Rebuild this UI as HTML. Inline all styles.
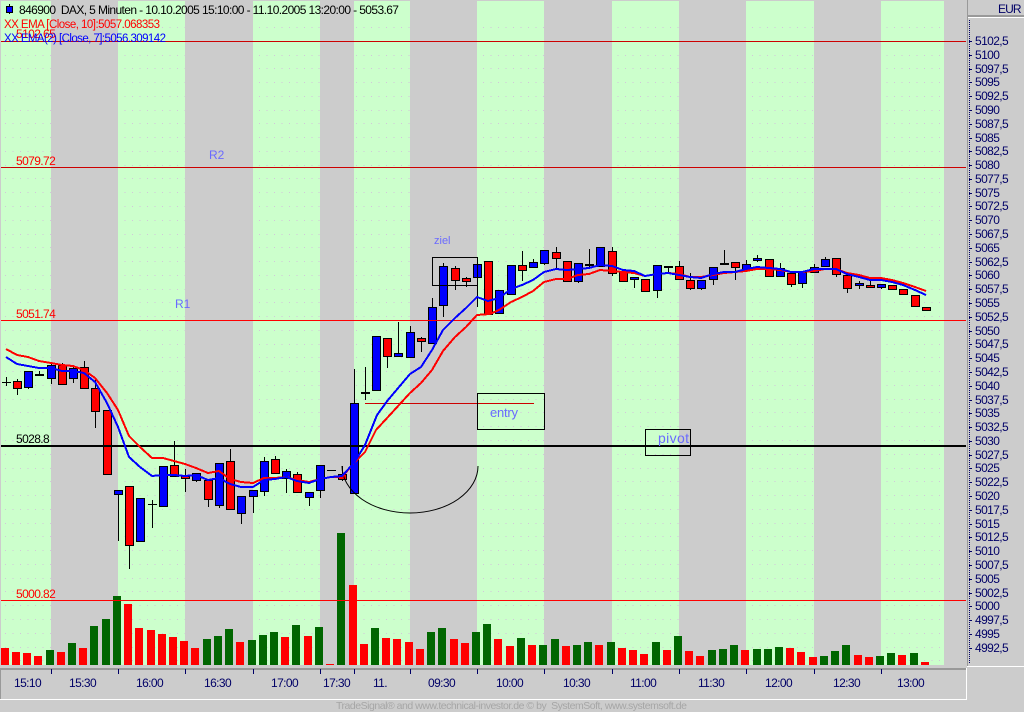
<!DOCTYPE html>
<html><head><meta charset="utf-8"><title>DAX</title>
<style>
html,body{margin:0;padding:0;background:#ccc;width:1024px;height:712px;overflow:hidden}
svg{display:block;font-family:"Liberation Sans",sans-serif;font-size:12px}
.c{shape-rendering:crispEdges}
.ax text{fill:#000066;letter-spacing:-.6px}
.lv{letter-spacing:-.6px}
.n{fill:#6a6aff}
</style></head><body>
<svg width="1024" height="712" viewBox="0 0 1024 712" xmlns="http://www.w3.org/2000/svg">
<rect width="1024" height="712" fill="#cccccc"/>
<g class="c">
<rect x="1" y="1" width="943" height="664" fill="#ccffcc"/>
<path fill="none" stroke="#d2c6da" stroke-width="1" stroke-dasharray="1 6.47" d="M5 27.5H944M5 55.5H944M5 68.5H944M5 82.5H944M5 96.5H944M5 110.5H944M5 123.5H944M5 137.5H944M5 151.5H944M5 165.5H944M5 178.5H944M5 192.5H944M5 206.5H944M5 220.5H944M5 234.5H944M5 247.5H944M5 261.5H944M5 275.5H944M5 289.5H944M5 302.5H944M5 316.5H944M5 330.5H944M5 344.5H944M5 357.5H944M5 371.5H944M5 385.5H944M5 399.5H944M5 412.5H944M5 426.5H944M5 440.5H944M5 454.5H944M5 468.5H944M5 481.5H944M5 495.5H944M5 509.5H944M5 523.5H944M5 536.5H944M5 550.5H944M5 564.5H944M5 578.5H944M5 591.5H944M5 605.5H944M5 619.5H944M5 633.5H944M5 647.5H944M5 660.5H944"/>
<path fill="#cccccc" d="M51 0h67v665h-67zM185 0h68v665h-68zM320 0h34v665h-34zM410 0h67v665h-67zM544 0h68v665h-68zM679 0h67v665h-67zM814 0h67v665h-67zM944 0h23v665h-23z"/>
<!-- volume red -->
<path fill="#ff0000" d="M1 648h8v17h-8zM12 652h8v13h-8zM23 653h8v12h-8zM34 656h8v9h-8zM57 652h8v13h-8zM79 648h8v17h-8zM124 604h8v61h-8zM135 628h8v37h-8zM147 630h8v35h-8zM158 634h8v31h-8zM169 637h8v28h-8zM180 641h8v24h-8zM191 648h8v17h-8zM236 642h8v23h-8zM281 637h8v28h-8zM304 636h8v29h-8zM326 664h8v1h-8zM349 585h8v80h-8zM360 644h8v21h-8zM382 638h8v27h-8zM393 639h8v26h-8zM405 642h8v23h-8zM416 649h8v16h-8zM450 639h8v26h-8zM461 643h8v22h-8zM494 639h8v26h-8zM506 646h8v19h-8zM528 645h8v20h-8zM562 646h8v19h-8zM595 645h8v20h-8zM618 648h8v17h-8zM629 650h8v15h-8zM640 654h8v11h-8zM663 650h8v15h-8zM685 651h8v14h-8zM696 656h8v9h-8zM741 650h8v15h-8zM786 648h8v17h-8zM797 652h8v13h-8zM809 657h8v8h-8zM854 655h8v10h-8zM865 657h8v8h-8zM898 655h8v10h-8zM921 662h8v3h-8z"/>
<!-- volume green -->
<path fill="#006600" d="M46 650h8v15h-8zM68 643h8v22h-8zM90 626h8v39h-8zM102 619h8v46h-8zM113 596h8v69h-8zM203 639h8v26h-8zM214 636h8v29h-8zM225 629h8v36h-8zM248 640h8v25h-8zM259 635h8v30h-8zM270 632h8v33h-8zM292 625h8v40h-8zM315 627h8v38h-8zM337 533h8v132h-8zM371 628h8v37h-8zM427 632h8v33h-8zM438 628h8v37h-8zM472 632h8v33h-8zM483 624h8v41h-8zM517 638h8v27h-8zM539 645h8v20h-8zM551 639h8v26h-8zM573 645h8v20h-8zM584 642h8v23h-8zM607 642h8v23h-8zM652 642h8v23h-8zM674 636h8v29h-8zM708 650h8v15h-8zM719 649h8v16h-8zM730 645h8v20h-8zM753 649h8v16h-8zM764 649h8v16h-8zM775 647h8v18h-8zM820 656h8v9h-8zM831 651h8v14h-8zM842 645h8v20h-8zM876 656h8v9h-8zM887 653h8v12h-8zM910 653h8v12h-8z"/>
<!-- wicks and dashes -->
<path fill="none" stroke="#000" stroke-width="1" d="M6.5 377V386M2 382.5H11M17.5 379V395M28.5 371V389M39.5 371V376M51.5 364V384M62.5 363V385M73.5 365V383M84.5 361V388M95.5 379V428M118.5 494V541M129.5 545V569M152.5 500V528M148 504.5H157M174.5 441V476M185.5 469V492M196.5 473V482M208.5 499V507M219.5 505V508M230.5 449V461M241.5 513V524M253.5 496V513M264.5 457V496M275.5 456V474M286.5 469V493M297.5 472V493M309.5 497V506M320.5 490V498M327 470.5H336M342.5 466V481M354.5 369V403M365.5 367V400M387.5 356V368M398.5 322V353M410.5 326V332M421.5 337V352M432.5 298V344M443.5 263V317M455.5 266V290M466.5 277V287M477.5 277V307M522.5 251V281M533.5 259V267M544.5 263V265M556.5 247V268M578.5 281V283M589.5 249V268M612.5 247V276M634.5 279V288M657.5 290V298M668.5 267V272M679.5 261V266M690.5 273V290M701.5 288V290M713.5 279V285M724.5 250V264M735.5 267V280M746.5 260V264M757.5 255V262M780.5 263V268M791.5 284V287M802.5 283V288M814.5 264V267M825.5 257V259M836.5 274V277M847.5 288V293M859.5 281V289M870.5 280V285M881.5 287V289"/>
<path fill="#000" d="M35 374h9v2h-9zM361 392h9v2h-9zM585 264h9v2h-9zM664 266h9v2h-9zM720 263h9v2h-9z"/>
<!-- red bodies -->
<path fill="#ff0000" stroke="#000" stroke-width="1" d="M13.5 381.5h8v7h-8zM58.5 365.5h8v19h-8zM80.5 367.5h8v21h-8zM91.5 388.5h8v23h-8zM103.5 410.5h8v64h-8zM125.5 486.5h8v59h-8zM170.5 465.5h8v11h-8zM181.5 476.5h8v2h-8zM204.5 480.5h8v19h-8zM226.5 461.5h8v48h-8zM271.5 459.5h8v14h-8zM293.5 474.5h8v18h-8zM338.5 474.5h8v5h-8zM383.5 338.5h8v18h-8zM417.5 338.5h8v3h-8zM451.5 268.5h8v12h-8zM462.5 278.5h8v3h-8zM484.5 261.5h8v53h-8zM518.5 265.5h8v5h-8zM552.5 252.5h8v6h-8zM563.5 261.5h8v20h-8zM608.5 251.5h8v22h-8zM619.5 272.5h8v9h-8zM641.5 279.5h8v12h-8zM675.5 266.5h8v13h-8zM686.5 280.5h8v8h-8zM731.5 262.5h8v5h-8zM765.5 259.5h8v17h-8zM787.5 273.5h8v11h-8zM832.5 258.5h8v16h-8zM843.5 275.5h8v13h-8zM866.5 285.5h8v2h-8zM888.5 285.5h8v4h-8zM899.5 289.5h8v5h-8zM911.5 295.5h8v11h-8zM922.5 307.5h8v3h-8z"/>
<!-- blue bodies -->
<path fill="#0000ff" stroke="#000" stroke-width="1" d="M24.5 371.5h8v16h-8zM47.5 365.5h8v13h-8zM69.5 368.5h8v10h-8zM114.5 490.5h8v4h-8zM136.5 498.5h8v43h-8zM159.5 466.5h8v40h-8zM192.5 473.5h8v7h-8zM215.5 463.5h8v42h-8zM237.5 496.5h8v17h-8zM249.5 490.5h8v6h-8zM260.5 461.5h8v30h-8zM282.5 471.5h8v7h-8zM305.5 492.5h8v5h-8zM316.5 465.5h8v25h-8zM350.5 403.5h8v90h-8zM372.5 336.5h8v54h-8zM394.5 353.5h8v3h-8zM406.5 332.5h8v25h-8zM428.5 307.5h8v36h-8zM439.5 266.5h8v39h-8zM473.5 264.5h8v13h-8zM495.5 290.5h8v23h-8zM507.5 265.5h8v29h-8zM529.5 262.5h8v5h-8zM540.5 250.5h8v13h-8zM574.5 263.5h8v18h-8zM596.5 247.5h8v19h-8zM630.5 277.5h8v2h-8zM653.5 265.5h8v25h-8zM697.5 280.5h8v8h-8zM709.5 267.5h8v12h-8zM742.5 264.5h8v6h-8zM753.5 258.5h8v2h-8zM776.5 268.5h8v8h-8zM798.5 272.5h8v11h-8zM810.5 267.5h8v5h-8zM821.5 259.5h8v7h-8zM855.5 283.5h8v2h-8zM877.5 284.5h8v3h-8z"/>
<!-- level lines -->
<path fill="#cc0000" d="M1 41h965v1H1zM1 167h965v1H1z"/>
<path fill="#ff0000" d="M1 320h965v1H1zM1 600h965v1H1z"/>
<path fill="#000" d="M1 445h965v2H1z"/>
<path fill="#cc0000" d="M365 403h169v1H365z"/>
<!-- boxes -->
<path fill="none" stroke="#000" stroke-width="1" d="M432.5 257.5H477.5V285.5H432.5ZM477.5 393.5H544.5V429.5H477.5ZM645.5 429.5H690.5V455.5H645.5Z"/>
</g>
<!-- arc -->
<path fill="none" stroke="#000" stroke-width="1" d="M342 466A68 47 0 0 0 478 466"/>
<!-- EMA -->
<g class="c">
<polyline fill="none" stroke="#ff0000" stroke-width="2" points="6,349 17,355 28,357 39,361 51,363 62,365 73,366 84,370 95,378 107,393 118,410 129,436 140,447 152,458 163,458 174,461 185,464 196,468 208,473 219,471 230,479 241,482 253,483 264,478 275,478 286,477 297,480 309,482 320,479 331,477 342,477 354,463 365,452 376,430 388,417 410,393 421,383 432,370 443,351 455,337 466,327 477,315 490,314 499,310 511,302 522,297 533,291 544,282 556,279 567,279 578,275 589,274 600,270 612,271 623,272 634,273 645,276 657,274 668,273 679,274 690,277 701,277 713,275 724,273 735,272 746,271 757,269 769,269 780,270 791,272 802,272 814,271 825,269 836,269 847,273 859,275 870,278 881,278 892,280 903,283 915,287 926,291"/>
<polyline fill="none" stroke="#0000ff" stroke-width="2" points="6,357 17,364 28,366 39,368 51,368 62,371 73,371 84,373 95,382 107,403 118,427 129,457 140,467 152,476 163,475 174,475 185,476 196,475 208,480 219,478 230,484 241,487 253,487 264,480 275,479 286,477 297,481 309,483 320,479 331,477 342,476 354,463 365,445 377,415 388,400 410,374 421,367 432,350 443,330 455,318 466,308 477,297 488,301 499,298 511,289 522,285 533,280 544,272 556,269 567,270 578,269 589,268 600,265 612,266 623,270 634,271 645,276 657,274 668,273 679,275 690,277 701,278 713,274 724,272 735,272 746,269 757,267 769,268 780,269 791,272 802,272 814,269 825,269 836,269 847,274 859,277 870,280 881,280 892,282 903,285 915,290 926,295"/>
</g>
<!-- header -->
<g class="c"><path stroke="#000" d="M9.5 4V14"/><rect x="6.5" y="6.5" width="6" height="6" fill="#0000ff" stroke="#000"/></g>
<text x="19" y="14" fill="#000" textLength="380" xml:space="preserve">846900  DAX, 5 Minuten - 10.10.2005 15:10:00 - 11.10.2005 13:20:00 - 5053.67</text>
<text x="16" y="38" fill="#ff0000" class="lv">5102.65</text>
<text x="4" y="28" fill="#ff0000" style="font-size:11.5px" textLength="156">XX EMA [Close, 10]:5057.068353</text>
<text x="4" y="42" fill="#0000ff" style="font-size:11.5px" textLength="162">XX EMA(2) [Close, 7]:5056.309142</text>
<!-- level labels -->
<text x="16" y="165" fill="#ff0000" class="lv">5079.72</text>
<text x="16" y="318" fill="#ff0000" class="lv">5051.74</text>
<text x="16" y="443" fill="#000" class="lv">5028.8</text>
<text x="16" y="598" fill="#ff0000" class="lv">5000.82</text>
<!-- notes -->
<text x="209" y="159" class="n">R2</text>
<text x="175" y="308" class="n">R1</text>
<text x="434" y="244" class="n" style="font-size:11px">ziel</text>
<text x="490" y="417" class="n" style="font-size:13px" textLength="28">entry</text>
<text x="658" y="443" class="n" style="font-size:14px" textLength="31">pivot</text>
<!-- frame -->
<g class="c">
<path fill="#999999" d="M0 668h966v2H0zM0 668h1v31H0zM967 0h1v666h-1zM967 15h57v2h-57z"/>
<path fill="#ffffff" d="M0 699h967v1H0zM966 668h1v32h-1zM968 17h56v1h-56zM967 666h57v1h-57z"/>
<path fill="none" stroke="#000066" stroke-dasharray="1 1" d="M969.5 20V664"/>
<path fill="#000066" d="M969 41h3v1h-3zM969 55h3v1h-3zM969 69h3v1h-3zM969 82h3v1h-3zM969 96h3v1h-3zM969 110h3v1h-3zM969 124h3v1h-3zM969 138h3v1h-3zM969 151h3v1h-3zM969 165h3v1h-3zM969 179h3v1h-3zM969 193h3v1h-3zM969 206h3v1h-3zM969 220h3v1h-3zM969 234h3v1h-3zM969 248h3v1h-3zM969 262h3v1h-3zM969 275h3v1h-3zM969 289h3v1h-3zM969 303h3v1h-3zM969 317h3v1h-3zM969 331h3v1h-3zM969 344h3v1h-3zM969 358h3v1h-3zM969 372h3v1h-3zM969 386h3v1h-3zM969 400h3v1h-3zM969 413h3v1h-3zM969 427h3v1h-3zM969 441h3v1h-3zM969 455h3v1h-3zM969 468h3v1h-3zM969 482h3v1h-3zM969 496h3v1h-3zM969 510h3v1h-3zM969 524h3v1h-3zM969 537h3v1h-3zM969 551h3v1h-3zM969 565h3v1h-3zM969 579h3v1h-3zM969 593h3v1h-3zM969 606h3v1h-3zM969 620h3v1h-3zM969 634h3v1h-3zM969 648h3v1h-3z"/>
<path fill="#000066" d="M51 669h1v5h-1zM118 669h1v5h-1zM185 669h1v5h-1zM253 669h1v5h-1zM320 669h1v5h-1zM354 669h1v5h-1zM410 669h1v5h-1zM477 669h1v5h-1zM544 669h1v5h-1zM612 669h1v5h-1zM679 669h1v5h-1zM746 669h1v5h-1zM814 669h1v5h-1zM881 669h1v5h-1z"/>
</g>
<g class="ax">
<text x="998" y="13" textLength="23">EUR</text>
<text x="975" y="45">5102,5</text><text x="975" y="59">5100</text><text x="975" y="73">5097,5</text><text x="975" y="86">5095</text><text x="975" y="100">5092,5</text><text x="975" y="114">5090</text><text x="975" y="128">5087,5</text><text x="975" y="142">5085</text><text x="975" y="155">5082,5</text><text x="975" y="169">5080</text><text x="975" y="183">5077,5</text><text x="975" y="197">5075</text><text x="975" y="210">5072,5</text><text x="975" y="224">5070</text><text x="975" y="238">5067,5</text><text x="975" y="252">5065</text><text x="975" y="266">5062,5</text><text x="975" y="279">5060</text><text x="975" y="293">5057,5</text><text x="975" y="307">5055</text><text x="975" y="321">5052,5</text><text x="975" y="335">5050</text><text x="975" y="348">5047,5</text><text x="975" y="362">5045</text><text x="975" y="376">5042,5</text><text x="975" y="390">5040</text><text x="975" y="404">5037,5</text><text x="975" y="417">5035</text><text x="975" y="431">5032,5</text><text x="975" y="445">5030</text><text x="975" y="459">5027,5</text><text x="975" y="472">5025</text><text x="975" y="486">5022,5</text><text x="975" y="500">5020</text><text x="975" y="514">5017,5</text><text x="975" y="528">5015</text><text x="975" y="541">5012,5</text><text x="975" y="555">5010</text><text x="975" y="569">5007,5</text><text x="975" y="583">5005</text><text x="975" y="597">5002,5</text><text x="975" y="610">5000</text><text x="975" y="624">4997,5</text><text x="975" y="638">4995</text><text x="975" y="652">4992,5</text>
<text x="14" y="687">15:10</text><text x="69" y="687">15:30</text><text x="136" y="687">16:00</text><text x="204" y="687">16:30</text><text x="271" y="687">17:00</text><text x="323" y="687">17:30</text><text x="373" y="687">11.</text><text x="428" y="687">09:30</text><text x="496" y="687">10:00</text><text x="563" y="687">10:30</text><text x="630" y="687">11:00</text><text x="698" y="687">11:30</text><text x="765" y="687">12:00</text><text x="833" y="687">12:30</text><text x="897" y="687">13:00</text>
</g>
<text x="336" y="709" fill="#a6a6a6" style="font-size:10.5px" textLength="351" xml:space="preserve">TradeSignal® and www.technical-investor.de © by  SystemSoft, www.systemsoft.de</text>
</svg>
</body></html>
